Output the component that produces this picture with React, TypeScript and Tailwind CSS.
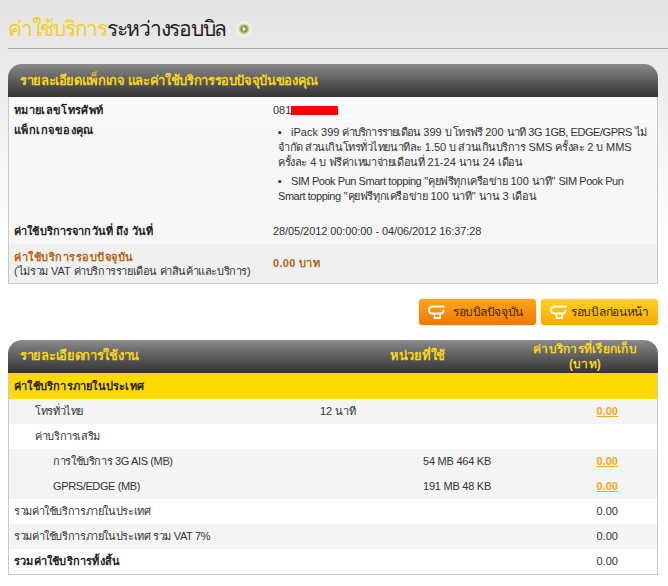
import React from "react";

const font = { fontFamily: '"Liberation Sans", Tahoma, "Noto Sans", sans-serif' };

function LoopIcon() {
  return (
    <svg width="17" height="15" viewBox="0 0 17 15" fill="none" className="shrink-0">
      <path d="M15.5 1.5H5C2.5 1.5 1 2.8 1 5C1 7.2 2.5 8.5 5 8.5H12.5C14.3 8.5 15.5 7.2 15.5 5.5" stroke="#fff" strokeWidth="2" strokeOpacity="0.92" strokeLinecap="round" />
      <path d="M6.5 9V13H12V9" stroke="#fff" strokeWidth="1.8" strokeOpacity="0.9" />
    </svg>
  );
}

function T({ children, s = "tracking-[-0.45px]" }: { children: React.ReactNode; s?: string }) {
  return <span className={s}>{children}</span>;
}

function InfoRow({ label, children, className = "" }: { label: React.ReactNode; children: React.ReactNode; className?: string }) {
  return (
    <div className={`grid grid-cols-[259px_1fr] px-[5px] ${className}`}>
      <div>{label}</div>
      <div>{children}</div>
    </div>
  );
}

const tight = "tracking-[-0.8px]";
const latin = "tracking-[-0.45px]";

const rows = [
  { label: "โทรทั่วไทย", indent: "pl-[26px]", unit: "", mid: "12 นาที", value: "0.00", link: true, shade: true },
  { label: "ค่าบริการเสริม", indent: "pl-[26px]", unit: "", mid: "", value: "", link: false, shade: false },
  { label: "การใช้บริการ 3G AIS (MB)", indent: "pl-[44px]", unit: "54 MB 464 KB", mid: "", value: "0.00", link: true, shade: true },
  { label: "GPRS/EDGE (MB)", indent: "pl-[44px] tracking-[-0.7px]", unit: "191 MB 48 KB", mid: "", value: "0.00", link: true, shade: true },
  { label: "รวมค่าใช้บริการภายในประเทศ", indent: "pl-[5px]", unit: "", mid: "", value: "0.00", link: false, shade: false },
  { label: "รวมค่าใช้บริการภายในประเทศ รวม VAT 7%", indent: "pl-[5px]", unit: "", mid: "", value: "0.00", link: false, shade: true },
  { label: "รวมค่าใช้บริการทั้งสิ้น", indent: "pl-[5px]", unit: "", mid: "", value: "0.00", link: false, shade: false, bold: true },
];

export default function App() {
  return (
    <div style={font} className="w-[668px] h-[586px] overflow-hidden bg-gradient-to-b from-[#e3e3e3] to-white to-[240px] text-[11px] leading-[14px] text-[#333] px-2">
      <div className="h-[49px] border-b border-[#a9a9a9] flex items-center pt-[9px] w-[660px]">
        <h1 className="text-[21px] font-normal leading-[30px] text-[#222] tracking-[-1.25px]">
          <span className="text-[#f5cf1b]">ค่าใช้บริการ</span>ระหว่างรอบบิล
        </h1>
        <svg width="18" height="18" viewBox="0 0 18 18" className="ml-[9px]">
          <circle cx="9" cy="9" r="8" fill="#f2f3dc" />
          <circle cx="9" cy="9" r="5.5" fill="#cfd3a6" />
          <circle cx="9" cy="9" r="3.8" fill="#8f9650" />
          <path d="M7.8 6.6L11 9L7.8 11.4Z" fill="#f6f6e6" />
        </svg>
      </div>

      <section className="mt-[15px] w-[650px]">
        <div className="h-[33px] rounded-tl-[14px] rounded-tr-[14px] bg-gradient-to-b from-[#8a8a8a] to-[#343434] flex items-center pl-3 text-[13px] font-bold text-[#f7d51d] tracking-[-0.36px]">
          รายละเอียดแพ็กเกจ และค่าใช้บริการรอบปัจจุบันของคุณ
        </div>
        <div className="border-x border-b border-[#c9c9c9] bg-[#f6f6f6]">
          <InfoRow className="h-[26px] items-center bg-[#fafafa]" label={<b className="text-[#222] tracking-[0.35px]">หมายเลขโทรศัพท์</b>}>
            <div className="flex items-center">
              081<span className="w-[47px] h-[9px] bg-[#ff0000]" />
            </div>
          </InfoRow>
          <InfoRow className="h-[93px]" label={<b className="text-[#222] tracking-[0.45px]">แพ็กเกจของคุณ</b>}>
            <div className="text-[11px] leading-[15px] pt-[2px] whitespace-nowrap">
              <p className="pl-[5px]">
                ▪&nbsp;&nbsp;&nbsp;iPack 399 <T s={tight}>ค่าบริการรายเดือน</T> 399 <T s={tight}>บ โทรฟรี</T> 200 <T s={tight}>นาที</T> <T s={latin}>3G 1GB, EDGE/GPRS</T> <T s={tight}>ไม่</T><br />
                <T>จำกัด ส่วนเกินโทรทั่วไทยนาทีละ</T> 1.50 <T>บ ส่วนเกินบริการ</T> SMS <T>ครั้งละ</T> 2 <T>บ</T> MMS<br />
                <T s="tracking-[-0.38px]">ครั้งละ</T> 4 <T s="tracking-[-0.38px]">บ ฟรีค่าเหมาจ่ายเดือนที่</T> 21-24 <T s="tracking-[-0.38px]">นาน</T> 24 <T s="tracking-[-0.38px]">เดือน</T>
              </p>
              <p className="pl-[5px] mt-[4px]">
                ▪&nbsp;&nbsp;&nbsp;<T s={latin}>SIM Pook Pun Smart topping</T> "<T>คุยฟรีทุกเครือข่าย</T> 100 <T>นาที</T>" <T s={latin}>SIM Pook Pun</T><br />
                <T s={latin}>Smart topping</T> "<T s="tracking-[-0.4px]">คุยฟรีทุกเครือข่าย</T> 100 <T s="tracking-[-0.4px]">นาที</T>" <T s="tracking-[-0.4px]">นาน</T> 3 <T s="tracking-[-0.4px]">เดือน</T>
              </p>
            </div>
          </InfoRow>
          <InfoRow className="h-[28px] items-center pt-[1px]" label={<b className="text-[#222] tracking-[0.13px]">ค่าใช้บริการจากวันที่ ถึง วันที่</b>}>
            <span className="tracking-[-0.08px]">28/05/2012 00:00:00 - 04/06/2012 16:37:28</span>
          </InfoRow>
          <InfoRow
            className="h-[39px] items-center bg-[#eff0f0]"
            label={
              <div className="whitespace-nowrap">
                <b className="text-[#b8620f] tracking-[0.5px]">ค่าใช้บริการรอบปัจจุบัน</b>
                <div>(<T s="tracking-[-0.35px]">ไม่รวม</T> VAT <T s="tracking-[-0.4px]">ค่าบริการรายเดือน ค่าสินค้าและบริการ</T>)</div>
              </div>
            }
          >
            <b className="text-[#b8620f] tracking-[0.3px] block pb-[1px]">0.00 บาท</b>
          </InfoRow>
        </div>
      </section>

      <div className="w-[650px] mt-[15px] flex justify-end gap-[5px]">
        <button className="w-[117px] h-[26px] rounded-[3px] bg-gradient-to-b from-[#ffa51e] to-[#ee7800] flex items-center pl-[9px] text-[12px] text-[#3a2a00] tracking-[-0.42px] shadow-[0_0_2px_#f8c070]">
          <LoopIcon />
          <span className="ml-[8px] whitespace-nowrap">รอบบิลปัจจุบัน</span>
        </button>
        <button className="w-[117px] h-[26px] rounded-[3px] bg-gradient-to-b from-[#ffd31e] to-[#f5a800] flex items-center pl-[9px] text-[12px] text-[#3a2a00] tracking-[-0.3px] shadow-[0_0_2px_#f8e080]">
          <LoopIcon />
          <span className="ml-[4px] whitespace-nowrap">รอบบิลก่อนหน้า</span>
        </button>
      </div>

      <section className="mt-[15px] w-[650px]">
        <div className="h-[33px] rounded-tl-[14px] rounded-tr-[14px] bg-gradient-to-b from-[#8a8a8a] to-[#343434] grid grid-cols-[325px_145px_1fr] items-center pl-3 text-[13px] font-bold text-[#f7d51d]">
          <div className="tracking-[-0.3px] pb-[2px]">รายละเอียดการใช้งาน</div>
          <div className="text-center tracking-[-0.3px] pb-[2px]">หน่วยที่ใช้</div>
          <div className="text-center leading-[15px] text-[12px] tracking-[0.25px] whitespace-nowrap pl-[22px]">ค่าบริการที่เรียกเก็บ<br />(บาท)</div>
        </div>
        <div className="border-x border-b border-[#c9c9c9] bg-white">
          <div className="h-[26px] bg-[#ffd800] flex items-center pl-[5px] font-bold text-[#222] tracking-[0.2px]">ค่าใช้บริการภายในประเทศ</div>
          {rows.map((r) => (
            <div key={r.label} className={`h-[25px] grid grid-cols-[311px_171px_1fr] items-center pb-[2px] ${r.shade ? "bg-[#f4f4f4]" : "bg-white"}`}>
              <div className={`whitespace-nowrap ${r.indent} ${r.bold ? "font-bold text-[#222] tracking-[0.2px]" : "tracking-[-0.37px]"}`}>{r.label}</div>
              <div className="flex justify-between">
                <span>{r.mid}</span>
                <span className="tracking-[-0.25px]">{r.unit}</span>
              </div>
              <div className="text-right pr-[39px]">
                {r.link ? <a className="font-bold text-[#f5a623] underline" href="#">{r.value}</a> : r.value}
              </div>
            </div>
          ))}
        </div>
      </section>
    </div>
  );
}
